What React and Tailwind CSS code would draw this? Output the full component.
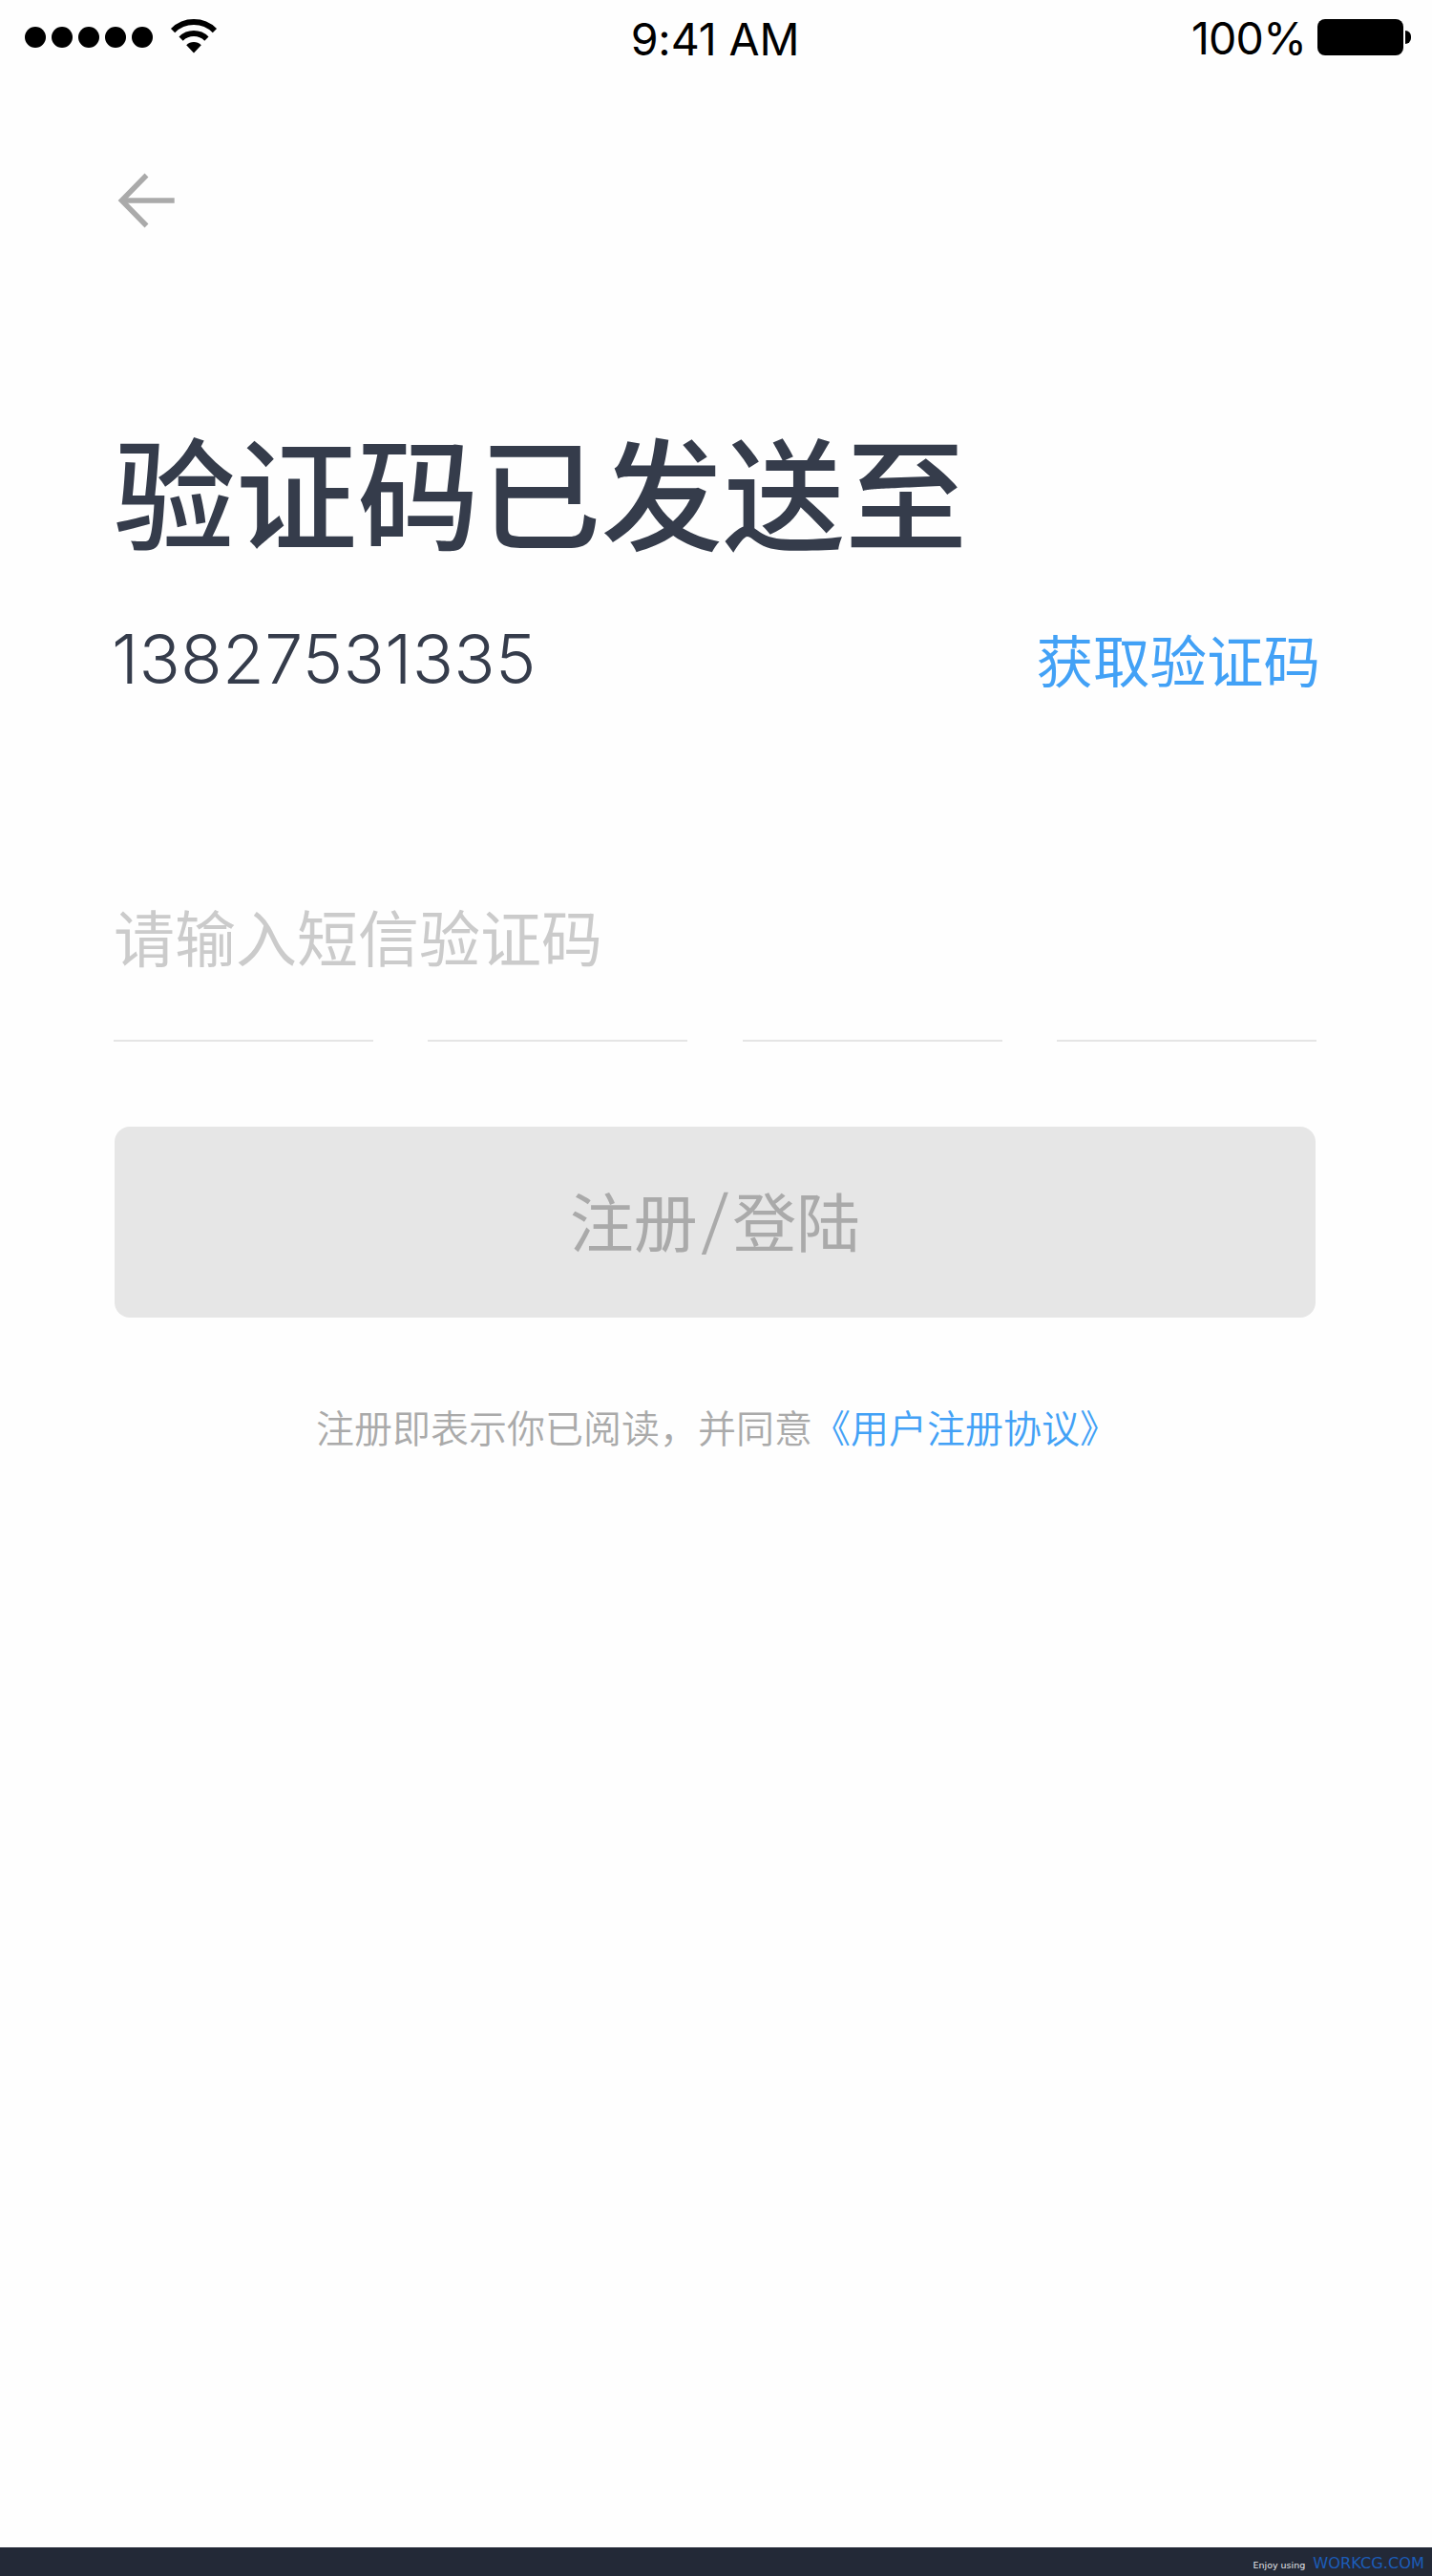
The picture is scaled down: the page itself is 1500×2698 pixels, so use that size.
import React, { useState } from 'react';

const CODE_LENGTH = 4;

const StatusBar = () => (
  <header className="grid h-20 grid-cols-3 text-[46.5px] leading-none text-black font-['Inter',sans-serif]">
    <div className="flex items-start pl-[26px] pt-5">
      <svg width="202" height="38" viewBox="26 20 202 38" fill="currentColor">
        {[37, 65, 93, 121, 149].map((cx) => (
          <circle key={cx} cx={cx} cy="39" r="11" />
        ))}
        <path d="M203 55.5 L195.2 47.2 A11 11 0 0 1 210.8 47.2 Z" />
        <path d="M189.6 40.6 A19 19 0 0 1 216.4 40.6" fill="none" stroke="currentColor" strokeWidth="6" />
        <path d="M181.1 32.1 A31 31 0 0 1 224.9 32.1" fill="none" stroke="currentColor" strokeWidth="6" />
      </svg>
    </div>
    <div className="flex items-start justify-center pt-[18px] pr-[2px]">
      <span className="tracking-[-0.1px]">9:41 AM</span>
    </div>
    <div className="flex items-start justify-end pr-[22px]">
      <span className="mr-[12px] pt-[17px] tracking-[-0.8px]">100%</span>
      <div className="flex items-center gap-[2px] pt-5">
        <div className="h-[38px] w-[90px] rounded-[8px] bg-black" />
        <div className="h-[14px] w-[6px] rounded-r-full bg-black" />
      </div>
    </div>
  </header>
);

const App = () => {
  const [phone] = useState('13827531335');

  return (
    <div className="flex h-[2698px] w-[1500px] flex-col bg-[#fefefe] font-['Noto_Sans_CJK_SC',sans-serif]">
      <StatusBar />

      <main className="flex flex-1 flex-col pl-[119px] pr-[121px]">
        <button type="button" aria-label="返回" className="mt-[100px] h-[60px] w-16 text-[#aaaaaa]">
          <svg width="64" height="60" viewBox="119 180 64 60" fill="none" stroke="currentColor" strokeWidth="5.5">
            <path d="M153.5 183.5 L127.5 210 L153.5 236.5" />
            <path d="M127 210 H182.7" />
          </svg>
        </button>

        <h1 className="mt-[208px] whitespace-nowrap text-[127.5px] font-medium leading-none tracking-[0.2px] text-[#353c4b]">
          验证码已发送至
        </h1>

        <div className="mt-[75px] flex h-[76px] items-start justify-between">
          <span className="-ml-[2px] pt-[4px] text-[71.5px] font-[350] leading-none tracking-[0.3px] text-[#353c4b] font-['Inter',sans-serif]">
            {phone}
          </span>
          <button type="button" className="-mr-[4px] pt-[9px] text-[59.5px] leading-none text-[#42a1f6]">
            获取验证码
          </button>
        </div>

        <label htmlFor="code" className="mt-[220px] h-[66px] whitespace-nowrap text-[64px] leading-none text-[#cbcbcb]">
          请输入短信验证码
        </label>

        <div id="code" className="mt-[76px] flex justify-between">
          {Array.from({ length: CODE_LENGTH }).map((_, i) => (
            <div key={i} className="h-[2px] w-[272px] bg-[#e5e5e5]" />
          ))}
        </div>

        <button
          type="button"
          disabled
          className="ml-px mr-px mt-[89px] flex h-[200px] items-center justify-center rounded-[16px] bg-[#e6e6e6] pb-[6px] text-[67px] leading-none text-[#aaaaaa]"
        >
          注册
          <span className="-skew-x-3 px-[5px] pb-[9px]">/</span>
          登陆
        </button>

        <p className="mt-[94px] whitespace-nowrap pl-[212px] text-[40px] font-[350] leading-none text-[#aaaaaa]">
          注册即表示你已阅读，并同意
          <a href="#" className="text-[#42a1f6]">
            《用户注册协议》
          </a>
        </p>
      </main>

      <footer className="flex h-[30px] items-center justify-end bg-[#232937] pr-[8px] leading-none font-['DejaVu_Sans',sans-serif]">
        <span className="mr-[8px] pt-[7px] text-[9.5px] text-[#e4e6ea]">Enjoy using</span>
        <span className="pt-[4px] text-[16.2px] text-[#1c5cb8]">WORKCG.COM</span>
      </footer>
    </div>
  );
};

export default App;
